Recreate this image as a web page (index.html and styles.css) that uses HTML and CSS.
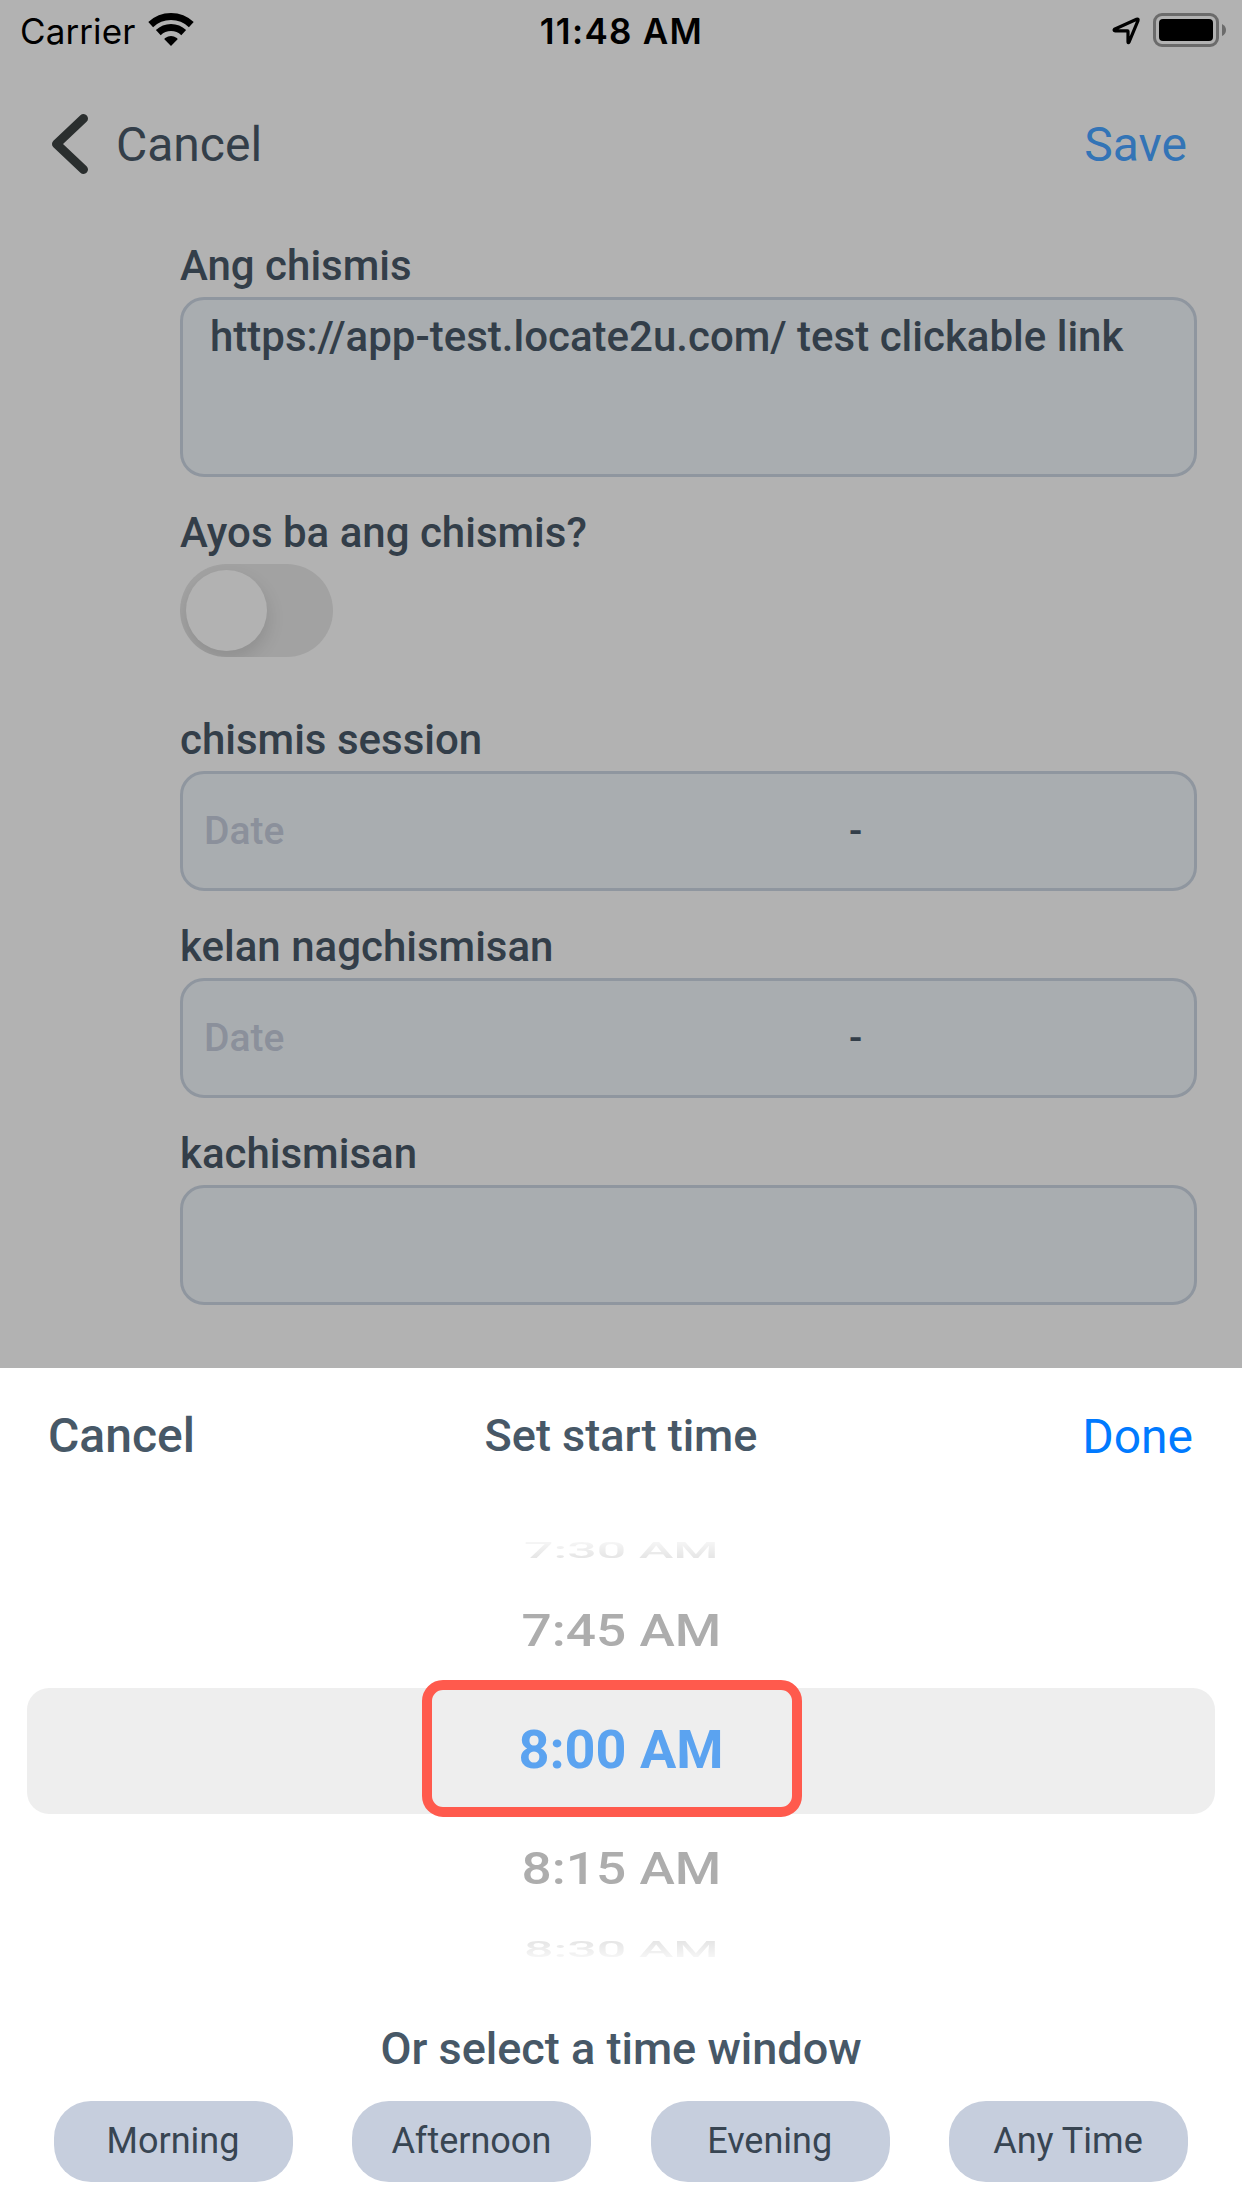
FILE: index.html
```
<!DOCTYPE html>
<html lang="en">
<head>
    <meta charset="utf-8"/>
    <meta name="viewport" content="width=device-width, initial-scale=1.0">
    <title>Set start time</title>
    <link rel="stylesheet" href="styles.css">
</head>
<body>
    <div class="screen">
        <div class="status-bar">
            <div class="status-left">
                <span class="carrier">Carrier</span>
                <svg class="wifi" width="46" height="34" viewBox="-23 -33 46 34">
                    <path d="M-20.3 -21.4A29.5 29.5 0 0 1 20.3 -21.4" fill="none" stroke="#000" stroke-width="7"/>
                    <path d="M-12.7 -13.4A18.5 18.5 0 0 1 12.7 -13.4" fill="none" stroke="#000" stroke-width="7"/>
                    <path d="M0 0L-6.6 -6.7Q-6.6 -7.4 -5.8 -8A10 10 0 0 1 5.8 -8Q6.6 -7.4 6.6 -6.7Z"/>
                </svg>
            </div>
            <span class="clock">11:48 AM</span>
            <div class="status-right">
                <svg class="location" width="30" height="30" viewBox="0 0 30 30">
                    <path d="M3.5 14.3L25.6 4.2Q27.6 3.4 27 5.6L18 27.2Q17.2 28.4 17 27V16.3Q17 15.8 16.5 15.8H4Q2.5 15.2 3.5 14.3Z" fill="none" stroke="#000" stroke-width="3.2" stroke-linejoin="round"/>
                </svg>
                <svg class="battery" width="74" height="34" viewBox="0 0 74 34">
                    <rect x="1.5" y="1.5" width="63" height="31" rx="7.5" fill="none" stroke="#6b6b6b" stroke-width="3"/>
                    <rect x="6" y="6" width="54" height="22" rx="4"/>
                    <path d="M69 11Q73 13 73 17Q73 21 69 23Z" fill="#6b6b6b"/>
                </svg>
            </div>
        </div>

        <div class="nav">
            <div class="nav-back">
                <svg class="chevron" width="38" height="62" viewBox="0 0 38 62">
                    <path d="M33.5 5.5L6.5 31L33.5 56.5" fill="none" stroke="#2a2e2e" stroke-width="9" stroke-linecap="round" stroke-linejoin="round"/>
                </svg>
                <span>Cancel</span>
            </div>
            <span class="nav-save">Save</span>
        </div>

        <div class="form">
            <div class="field">
                <div class="label">Ang chismis</div>
                <div class="input textarea">https://app-test.locate2u.com/ test clickable link</div>
            </div>
            <div class="field field-toggle">
                <div class="label">Ayos ba ang chismis?</div>
                <div class="toggle"><div class="knob"></div></div>
            </div>
            <div class="field">
                <div class="label">chismis session</div>
                <div class="input"><span class="date">Date</span><span>-</span></div>
            </div>
            <div class="field">
                <div class="label">kelan nagchismisan</div>
                <div class="input"><span class="date">Date</span><span>-</span></div>
            </div>
            <div class="field">
                <div class="label">kachismisan</div>
                <div class="input"></div>
            </div>
        </div>

        <div class="sheet">
            <div class="sheet-header">
                <span class="sheet-cancel">Cancel</span>
                <span class="sheet-title">Set start time</span>
                <span class="sheet-done">Done</span>
            </div>

            <div class="picker">
                <div class="row row-far-top"><span>7:30 AM</span></div>
                <div class="row row-top"><span>7:45 AM</span></div>
                <div class="row row-selected">
                    <span>8:00 AM</span>
                    <div class="highlight"></div>
                </div>
                <div class="row row-bottom"><span>8:15 AM</span></div>
                <div class="row row-far-bottom"><span>8:30 AM</span></div>
            </div>

            <div class="window-title">Or select a time window</div>
            <div class="windows">
                <div class="window">Morning</div>
                <div class="window">Afternoon</div>
                <div class="window">Evening</div>
                <div class="window">Any Time</div>
            </div>
        </div>
    </div>
</body>
</html>
```
FILE: styles.css
```
* {
    box-sizing: border-box;
}

body {
    margin: 0;
    background-color: #b2b2b2;
    font-family: Roboto, sans-serif;
}

.screen {
    width: 1242px;
    height: 2208px;
    display: flex;
    flex-direction: column;
    overflow: hidden;
}

/* Status bar */
.status-bar {
    height: 62px;
    padding: 0 15px 0 20px;
    display: grid;
    grid-template-columns: 1fr auto 1fr;
    align-items: center;
    font-family: Inter, sans-serif;
    font-size: 35px;
    line-height: 62px;
    color: #000;
}

.status-left, .status-right {
    display: flex;
    align-items: center;
}

.status-left {
    gap: 13px;
}

.status-right {
    justify-content: flex-end;
    gap: 12px;
}

.wifi, .location, .battery {
    margin-bottom: 2px;
}

.carrier {
    letter-spacing: 0.1px;
}

.clock {
    font-weight: 600;
    letter-spacing: 1.3px;
    margin-right: 4px;
}

/* Navigation */
.nav {
    height: 165px;
    padding: 0 55px 0 50px;
    display: flex;
    align-items: center;
    justify-content: space-between;
    font-size: 48px;
}

.nav-back {
    display: flex;
    align-items: center;
    gap: 28px;
    color: #333e49;
}

.chevron {
    margin-bottom: 2px;
}

.nav-save {
    color: #3374b6;
}

/* Form */
.form {
    height: 1141px;
    padding: 14px 45px 0 180px;
    display: flex;
    flex-direction: column;
    gap: 31px;
    font-weight: 500;
    color: #333e49;
}

.label {
    font-size: 42px;
    line-height: 49px;
    margin-bottom: 7px;
}

.input {
    height: 120px;
    padding: 0 21px;
    display: flex;
    align-items: center;
    background-color: #a9adb0;
    border: 3px solid #8f969f;
    border-radius: 24px;
    font-size: 39px;
}

.textarea {
    height: 180px;
    padding: 12px 27px;
    align-items: flex-start;
    font-size: 42px;
    line-height: 49px;
}

.date {
    width: 645px;
    color: #8b909b;
}

.field-toggle {
    margin-bottom: 27px;
}

.toggle {
    width: 153px;
    height: 93px;
    padding: 6px;
    background-color: #a2a2a2;
    border-radius: 47px;
    overflow: hidden;
}

.knob {
    width: 81px;
    height: 81px;
    border-radius: 50%;
    background-color: #b2b2b2;
    box-shadow: 1px 8px 18px rgba(0, 0, 0, 0.12);
}

/* Bottom sheet */
.sheet {
    flex: 1;
    background-color: #fff;
    color: #475867;
    font-weight: 500;
}

.sheet-header {
    height: 135px;
    padding: 0 48px;
    display: grid;
    grid-template-columns: 1fr auto 1fr;
    align-items: center;
    font-size: 48px;
}

.sheet-title {
    font-size: 45px;
}

.sheet-done {
    padding: 1px 1px 0 0;
    text-align: right;
    font-weight: 400;
    color: #007aff;
}

/* Time picker */
.picker {
    padding: 23px 27px 0;
    font-size: 54px;
    line-height: 54px;
    color: #adadad;
}

.row {
    display: flex;
    align-items: center;
    justify-content: center;
}

.row-top {
    height: 114px;
}

.row-bottom {
    height: 110px;
}

.row-top span, .row-bottom span {
    transform: scale(0.985, 0.83);
}

.row-far-top {
    height: 48px;
}

.row-far-bottom {
    height: 50px;
}

.row-far-top span, .row-far-bottom span {
    transform: scale(0.96, 0.42);
    color: #e2e2e2;
}

.row-far-top span {
    -webkit-mask-image: linear-gradient(rgba(0, 0, 0, 0.2), #000);
    mask-image: linear-gradient(rgba(0, 0, 0, 0.2), #000);
}

.row-far-bottom span {
    -webkit-mask-image: linear-gradient(#000, rgba(0, 0, 0, 0.2));
    mask-image: linear-gradient(#000, rgba(0, 0, 0, 0.2));
}

.row-selected {
    position: relative;
    height: 126px;
    padding-bottom: 2px;
    background-color: #eee;
    border-radius: 22px;
    font-weight: 700;
    color: #5ba3f0;
}

.highlight {
    position: absolute;
    left: 395px;
    top: -8px;
    width: 380px;
    height: 137px;
    border: 10px solid #ff5a4d;
    border-radius: 21px;
}

/* Time windows */
.window-title {
    margin: 48px 0 26px;
    text-align: center;
    font-size: 45px;
    line-height: 53px;
}

.windows {
    padding: 0 54px;
    display: flex;
    justify-content: space-between;
}

.window {
    width: 239px;
    height: 81px;
    padding-right: 1px;
    border-radius: 37px;
    background-color: #c6cedd;
    text-align: center;
    font-size: 36px;
    font-weight: 400;
    line-height: 80px;
    color: #384552;
}
```
